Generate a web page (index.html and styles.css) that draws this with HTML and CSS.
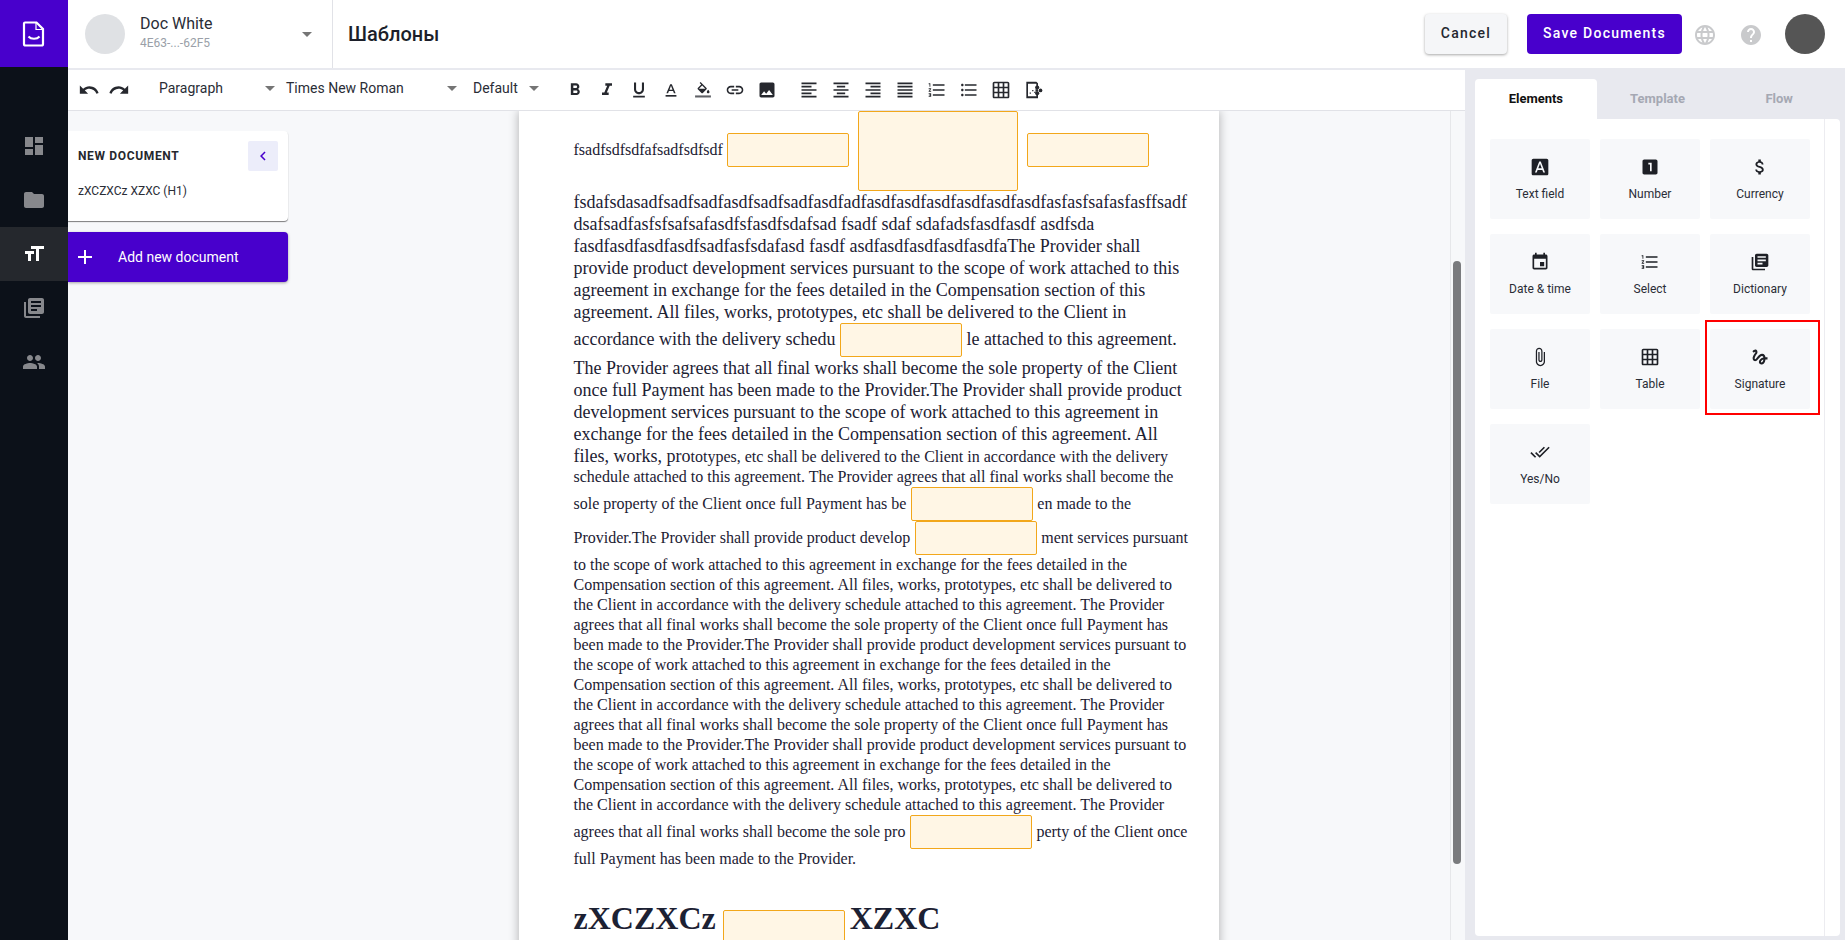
FILE: index.html
```html
<!DOCTYPE html>
<html lang="en">
<head>
    <meta charset="UTF-8">
    <meta name="viewport" content="width=device-width, initial-scale=1.0">
    <title>Шаблоны</title>
    <link rel="stylesheet" href="styles.css">
</head>
<body>
    <nav class="sidebar">
        <div class="logo">
            <svg width="28" height="28" viewBox="0 0 28 28"><path d="M5 2.5h11.5L23 9v15a1.5 1.5 0 0 1-1.5 1.500h-16A1.500 1.500 0 0 1 4 24V3.500a1 1 0 0 1 1-1z" fill="none" stroke="#fff" stroke-width="2.200"/><path d="M16 3v6.500h7" fill="none" stroke="#fff" stroke-width="1.200"/><path d="M8.500 16.500c2.500 3 8.500 3 11 0" fill="none" stroke="#fff" stroke-width="2"/></svg>
        </div>
        <a class="nav-item"><svg class="icon-24" viewBox="0 0 24 24"><path d="M3 13h8V3H3v10zm0 8h8v-6H3v6zm10 0h8V11h-8v10zm0-18v6h8V3h-8z"/></svg></a>
        <a class="nav-item"><svg class="icon-24" viewBox="0 0 24 24"><path d="M10 4H4c-1.100 0-1.990.9-1.990 2L2 18c0 1.100.9 2 2 2h16c1.100 0 2-.9 2-2V8c0-1.100-.9-2-2-2h-8l-2-2z"/></svg></a>
        <a class="nav-item active"><svg class="icon-24" viewBox="0 0 24 24"><path d="M9 4v3h5v12h3V7h5V4H9zm-6 8h3v7h3v-7h3V9H3v3z"/></svg></a>
        <a class="nav-item"><svg class="icon-24" viewBox="0 0 24 24"><path d="M4 6H2v14c0 1.100.9 2 2 2h14v-2H4V6zm16-4H8c-1.100 0-2 .9-2 2v12c0 1.100.9 2 2 2h12c1.100 0 2-.9 2-2V4c0-1.100-.9-2-2-2zm-1 9H9V9h10v2zm-4 4H9v-2h6v2zm4-8H9V5h10v2z"/></svg></a>
        <a class="nav-item"><svg class="icon-24" viewBox="0 0 24 24"><path d="M16 11c1.660 0 2.990-1.340 2.990-3S17.660 5 16 5c-1.660 0-3 1.340-3 3s1.340 3 3 3zm-8 0c1.660 0 2.990-1.340 2.990-3S9.660 5 8 5C6.340 5 5 6.340 5 8s1.340 3 3 3zm0 2c-2.330 0-7 1.170-7 3.500V19h14v-2.500c0-2.330-4.670-3.500-7-3.500zm8 0c-.29 0-.62.02-.97.05 1.160.84 1.970 1.970 1.970 3.450V19h6v-2.500c0-2.330-4.670-3.500-7-3.500z"/></svg></a>
    </nav>

    <div class="page">
        <header class="topbar">
            <div class="account">
                <div class="account-pic"></div>
                <div class="account-info">
                    <div class="account-name">Doc White</div>
                    <div class="account-id">4E63-...-62F5</div>
                </div>
                <span class="caret caret-push"></span>
            </div>
            <div class="page-title">Шаблоны</div>
            <div class="top-actions">
                <button class="btn btn-cancel">Cancel</button>
                <button class="btn btn-save">Save Documents</button>
                <svg class="icon-24 top-icon globe" viewBox="0 0 24 24"><path d="M11.990 2C6.470 2 2 6.480 2 12s4.470 10 9.990 10C17.520 22 22 17.520 22 12S17.520 2 11.990 2zm6.930 6h-2.950c-.32-1.250-.78-2.450-1.380-3.560 1.840.63 3.370 1.910 4.330 3.560zM12 4.040c.83 1.200 1.480 2.530 1.910 3.960h-3.820c.43-1.430 1.080-2.760 1.910-3.960zM4.260 14C4.100 13.360 4 12.690 4 12s.1-1.360.26-2h3.380c-.08.66-.14 1.320-.14 2 0 .68.06 1.340.14 2H4.260zm.82 2h2.950c.32 1.250.78 2.450 1.380 3.560-1.840-.63-3.370-1.900-4.330-3.560zm2.950-8H5.080c.96-1.660 2.490-2.930 4.330-3.560C8.810 5.550 8.350 6.750 8.030 8zM12 19.960c-.83-1.200-1.480-2.530-1.910-3.960h3.820c-.43 1.430-1.080 2.760-1.910 3.960zM14.340 14H9.660c-.09-.66-.16-1.320-.16-2 0-.68.07-1.350.16-2h4.680c.09.65.16 1.320.16 2 0 .68-.07 1.340-.16 2zm.25 5.560c.6-1.110 1.060-2.310 1.380-3.560h2.950c-.96 1.650-2.490 2.930-4.330 3.560zM16.360 14c.08-.66.14-1.320.14-2 0-.68-.06-1.340-.14-2h3.380c.16.64.26 1.310.26 2s-.1 1.360-.26 2h-3.380z"/></svg>
                <svg class="icon-24 top-icon" viewBox="0 0 24 24"><path d="M12 2C6.480 2 2 6.480 2 12s4.480 10 10 10 10-4.480 10-10S17.520 2 12 2zm1 17h-2v-2h2v2zm2.070-7.750l-.9.92C13.450 12.900 13 13.500 13 15h-2v-.5c0-1.100.45-2.100 1.170-2.830l1.240-1.260c.37-.36.59-.86.59-1.410 0-1.100-.9-2-2-2s-2 .9-2 2H8c0-2.210 1.790-4 4-4s4 1.790 4 4c0 .88-.36 1.680-.93 2.250z"/></svg>
                <div class="user-pic"></div>
            </div>
        </header>

        <div class="workspace">
            <main class="editor">
                <div class="toolbar">
                    <svg class="icon-22" viewBox="0 0 24 24"><path d="M12.500 8c-2.650 0-5.050.99-6.900 2.600L2 7v9h9l-3.620-3.620c1.390-1.160 3.160-1.880 5.120-1.880 3.540 0 6.550 2.310 7.600 5.500l2.370-.78C21.080 11.030 17.150 8 12.500 8z"/></svg>
                    <svg class="icon-22 redo" viewBox="0 0 24 24"><path d="M18.400 10.600C16.550 8.990 14.150 8 11.500 8c-4.650 0-8.580 3.030-9.960 7.220L3.900 16c1.050-3.190 4.050-5.500 7.600-5.500 1.950 0 3.730.72 5.120 1.880L13 16h9V7l-3.600 3.600z"/></svg>
                    <div class="tool-select select-paragraph">Paragraph<span class="caret"></span></div>
                    <div class="tool-select select-font">Times New Roman<span class="caret"></span></div>
                    <div class="tool-select select-size">Default<span class="caret"></span></div>
                    <div class="tool-group">
                        <svg class="icon-20" viewBox="0 0 24 24"><path d="M15.600 10.790c.97-.67 1.650-1.770 1.650-2.790 0-2.260-1.750-4-4-4H7v14h7.040c2.090 0 3.710-1.700 3.710-3.790 0-1.520-.86-2.820-2.150-3.420zM10 6.500h3c.83 0 1.500.67 1.500 1.500s-.67 1.500-1.500 1.500h-3v-3zm3.500 9H10v-3h3.500c.83 0 1.500.67 1.500 1.500s-.67 1.500-1.500 1.500z"/></svg>
                        <svg class="icon-20" viewBox="0 0 24 24"><path d="M10 4v3h2.210l-3.420 8H6v3h8v-3h-2.210l3.420-8H18V4z"/></svg>
                        <svg class="icon-20" viewBox="0 0 24 24"><path d="M12 17c3.310 0 6-2.690 6-6V3h-2.500v8c0 1.930-1.570 3.500-3.500 3.500S8.500 12.930 8.500 11V3H6v8c0 3.310 2.690 6 6 6zm-7 2v2h14v-2H5z"/></svg>
                        <svg class="icon-20" viewBox="0 0 24 24"><path d="M5.500 18h13v2h-13z"/><path d="M11 5l-4.500 11h2l1-2.700h5l1 2.700h2L13 5h-2zm-.8 6.600L12 7l1.800 4.600h-3.600z"/></svg>
                        <svg class="icon-20" viewBox="0 0 24 24"><path transform="translate(3 2.400) scale(.8)" d="M16.560 8.940L7.620 0 6.210 1.410l2.380 2.380-5.150 5.150c-.59.59-.59 1.540 0 2.120l5.500 5.500c.29.29.68.44 1.060.44s.77-.15 1.060-.44l5.500-5.500c.59-.58.59-1.530 0-2.120zM5.210 10L10 5.210 14.790 10H5.210zM19 11.500s-2 2.170-2 3.500c0 1.100.9 2 2 2s2-.9 2-2c0-1.330-2-3.500-2-3.500z"/><path class="fill-bar" d="M2.500 18.500h19v2.500h-19z"/></svg>
                        <svg class="icon-20" viewBox="0 0 24 24"><path d="M3.900 12c0-1.710 1.390-3.100 3.100-3.100h4V7H7c-2.760 0-5 2.240-5 5s2.240 5 5 5h4v-1.900H7c-1.710 0-3.100-1.390-3.100-3.100zM8 13h8v-2H8v2zm9-6h-4v1.900h4c1.710 0 3.100 1.390 3.100 3.100s-1.390 3.100-3.100 3.100h-4V17h4c2.760 0 5-2.240 5-5s-2.240-5-5-5z"/></svg>
                        <svg class="icon-20" viewBox="0 0 24 24"><path d="M21 19V5c0-1.100-.9-2-2-2H5c-1.100 0-2 .9-2 2v14c0 1.100.9 2 2 2h14c1.100 0 2-.9 2-2zM8.500 13.500l2.500 3.010L14.500 12l4.500 6H5l3.500-4.500z"/></svg>
                    </div>
                    <div class="tool-group tool-group-align">
                        <svg class="icon-20" viewBox="0 0 24 24"><path d="M15 15H3v2h12v-2zm0-8H3v2h12V7zM3 13h18v-2H3v2zm0 8h18v-2H3v2zM3 3v2h18V3H3z"/></svg>
                        <svg class="icon-20" viewBox="0 0 24 24"><path d="M7 15v2h10v-2H7zm-4 6h18v-2H3v2zm0-8h18v-2H3v2zm4-6v2h10V7H7zM3 3v2h18V3H3z"/></svg>
                        <svg class="icon-20" viewBox="0 0 24 24"><path d="M3 21h18v-2H3v2zm6-4h12v-2H9v2zm-6-4h18v-2H3v2zm6-4h12V7H9v2zM3 3v2h18V3H3z"/></svg>
                        <svg class="icon-20" viewBox="0 0 24 24"><path d="M3 21h18v-2H3v2zm0-4h18v-2H3v2zm0-4h18v-2H3v2zm0-4h18V7H3v2zm0-6v2h18V3H3z"/></svg>
                        <svg class="icon-20" viewBox="0 0 24 24"><path d="M2 17h2v.5H3v1h1v.5H2v1h3v-4H2v1zm1-9h1V4H2v1h1v3zm-1 3h1.800L2 13.100v.9h3v-1H3.200L5 10.900V10H2v1zm5-6v2h14V5H7zm0 14h14v-2H7v2zm0-6h14v-2H7v2z"/></svg>
                        <svg class="icon-20" viewBox="0 0 24 24"><path d="M4 10.500c-.83 0-1.500.67-1.500 1.500s.67 1.500 1.500 1.500 1.500-.67 1.500-1.500-.67-1.500-1.500-1.500zm0-6c-.83 0-1.500.67-1.500 1.500S3.170 7.500 4 7.500 5.500 6.830 5.500 6 4.830 4.500 4 4.500zm0 12c-.83 0-1.500.68-1.500 1.500s.68 1.500 1.500 1.500 1.500-.68 1.500-1.500-.67-1.500-1.500-1.500zM7 19h14v-2H7v2zm0-6h14v-2H7v2zm0-8v2h14V5H7z"/></svg>
                        <svg class="icon-20" viewBox="0 0 24 24"><path d="M20 2H4c-1.100 0-2 .9-2 2v16c0 1.100.9 2 2 2h16c1.100 0 2-.9 2-2V4c0-1.100-.9-2-2-2zM8 20H4v-4h4v4zm0-6H4v-4h4v4zm0-6H4V4h4v4zm6 12h-4v-4h4v4zm0-6h-4v-4h4v4zm0-6h-4V4h4v4zm6 12h-4v-4h4v4zm0-6h-4v-4h4v4zm0-6h-4V4h4v4z"/></svg>
                        <svg class="icon-20" viewBox="0 0 24 24"><path d="M4 2h12l2 2v4h-2V4.500H6v15h10V17h2v5H4z"/><path d="M8 15h1.500v1.500H8zM11 12h1.500v1.500H11zM13.500 14h1.500v1.500h-1.500z"/><circle cx="17" cy="9" r="2.500"/><circle cx="21" cy="12.500" r="2.200"/><circle cx="17" cy="16" r="2.500"/><path d="M15 11h3v3h-3z"/></svg>
                    </div>
                </div>

                <div class="editor-body">
                    <aside class="outline">
                        <div class="outline-card">
                            <div class="outline-head">
                                <span class="outline-title">NEW DOCUMENT</span>
                                <button class="outline-back">
                                    <svg width="18" height="18" viewBox="0 0 24 24"><path d="M15.410 7.410L14 6l-6 6 6 6 1.410-1.410L10.830 12z"/></svg>
                                </button>
                            </div>
                            <div class="outline-item">zXCZXCz XZXC (H1)</div>
                        </div>
                        <button class="add-doc">
                            <svg class="icon-24" viewBox="0 0 24 24"><path d="M19 13h-6v6h-2v-6H5v-2h6V5h2v6h6v2z"/></svg>
                            <span>Add new document</span>
                        </button>
                    </aside>

                    <div class="doc-wrap">
                        <article class="doc">
                            <p class="doc-text">fsadfsdfsdfafsadfsdfsdf<span class="field"></span><span class="field field-big"></span><span class="field"></span></p>
                            <p class="doc-text"><span class="line-large">fsdafsdasadfsadfsadfasdfsadfsadfasdfadfasdfasdfasdfasdfasdfasdfasfasfsafasfasffsadf<br>dsafsadfasfsfsafsafasdfsfasdfsdafsad fsadf sdaf sdafadsfasdfasdf asdfsda fasdfasdfasdfasdfsadfasfsdafasd fasdf asdfasdfasdfasdfasdfaThe Provider shall provide product development services pursuant to the scope of work attached to this agreement in exchange for the fees detailed in the Compensation section of this agreement. All files, works, prototypes, etc shall be delivered to the Client in accordance with the delivery schedu<span class="field"></span>le attached to this agreement. The Provider agrees that all final works shall become the sole property of the Client once full Payment has been made to the Provider.The Provider shall provide product development services pursuant to the scope of work attached to this agreement in exchange for the fees detailed in the Compensation section of this agreement. All files, works, pro</span>totypes, etc shall be delivered to the Client in accordance with the delivery schedule attached to this agreement. The Provider agrees that all final works shall become the sole property of the Client once full Payment has be<span class="field"></span>en made to the Provider.The Provider shall provide product develop<span class="field"></span>ment services pursuant to the scope of work attached to this agreement in exchange for the fees detailed in the Compensation section of this agreement. All files, works, prototypes, etc shall be delivered to the Client in accordance with the delivery schedule attached to this agreement. The Provider agrees that all final works shall become the sole property of the Client once full Payment has been made to the Provider.The Provider shall provide product development services pursuant to the scope of work attached to this agreement in exchange for the fees detailed in the Compensation section of this agreement. All files, works, prototypes, etc shall be delivered to the Client in accordance with the delivery schedule attached to this agreement. The Provider agrees that all final works shall become the sole property of the Client once full Payment has been made to the Provider.The Provider shall provide product development services pursuant to the scope of work attached to this agreement in exchange for the fees detailed in the Compensation section of this agreement. All files, works, prototypes, etc shall be delivered to the Client in accordance with the delivery schedule attached to this agreement. The Provider agrees that all final works shall become the sole pro<span class="field"></span>perty of the Client once full Payment has been made to the Provider.</p>
                            <h1 class="doc-heading">zXCZXCz<span class="field"></span>XZXC</h1>
                        </article>
                    </div>

                    <div class="scroll-track"><div class="scroll-thumb"></div></div>
                </div>
            </main>

            <aside class="panel">
                <div class="tabs">
                    <div class="tab active">Elements</div>
                    <div class="tab">Template</div>
                    <div class="tab">Flow</div>
                </div>
                <div class="panel-body">
                    <div class="element-grid">
                        <div class="element">
                            <svg class="icon-20" viewBox="0 0 24 24"><path d="M9.930 13.500h4.140L12 7.980zM20 2H4c-1.100 0-2 .9-2 2v16c0 1.100.9 2 2 2h16c1.100 0 2-.9 2-2V4c0-1.100-.9-2-2-2zm-4.050 16.500l-1.140-3H9.170l-1.120 3H5.960l5.110-13h1.860l5.110 13h-2.090z"/></svg>
                            <span>Text field</span>
                        </div>
                        <div class="element">
                            <svg class="icon-20" viewBox="0 0 24 24"><path d="M19 3H5c-1.100 0-2 .9-2 2v14c0 1.100.9 2 2 2h14c1.100 0 2-.9 2-2V5c0-1.100-.9-2-2-2zm-5 14h-2V9h-2V7h4v10z"/></svg>
                            <span>Number</span>
                        </div>
                        <div class="element">
                            <svg class="icon-20" viewBox="0 0 24 24"><path d="M11.800 10.900c-2.270-.59-3-1.200-3-2.150 0-1.090 1.010-1.850 2.700-1.850 1.780 0 2.440.85 2.500 2.100h2.210c-.07-1.720-1.120-3.300-3.210-3.810V3h-3v2.160c-1.940.42-3.500 1.680-3.500 3.610 0 2.310 1.910 3.460 4.700 4.130 2.500.6 3 1.480 3 2.410 0 .69-.49 1.790-2.700 1.790-2.060 0-2.870-.92-2.980-2.100h-2.200c.12 2.190 1.760 3.420 3.680 3.830V21h3v-2.150c1.950-.37 3.500-1.500 3.500-3.550 0-2.840-2.430-3.810-4.700-4.400z"/></svg>
                            <span>Currency</span>
                        </div>
                        <div class="element">
                            <svg class="icon-20" viewBox="0 0 24 24"><path d="M17 12h-5v5h5v-5zM16 1v2H8V1H6v2H5c-1.110 0-1.990.9-1.990 2L3 19c0 1.100.89 2 2 2h14c1.100 0 2-.9 2-2V5c0-1.100-.9-2-2-2h-1V1h-2zm3 18H5V8h14v11z"/></svg>
                            <span>Date &amp; time</span>
                        </div>
                        <div class="element">
                            <svg class="icon-20" viewBox="0 0 24 24"><path d="M2 17h2v.5H3v1h1v.5H2v1h3v-4H2v1zm1-9h1V4H2v1h1v3zm-1 3h1.800L2 13.100v.9h3v-1H3.200L5 10.900V10H2v1zm5-6v2h14V5H7zm0 14h14v-2H7v2zm0-6h14v-2H7v2z"/></svg>
                            <span>Select</span>
                        </div>
                        <div class="element">
                            <svg class="icon-20" viewBox="0 0 24 24"><path d="M4 6H2v14c0 1.100.9 2 2 2h14v-2H4V6zm16-4H8c-1.100 0-2 .9-2 2v12c0 1.100.9 2 2 2h12c1.100 0 2-.9 2-2V4c0-1.100-.9-2-2-2zm-1 9H9V9h10v2zm-4 4H9v-2h6v2zm4-8H9V5h10v2z"/></svg>
                            <span>Dictionary</span>
                        </div>
                        <div class="element">
                            <svg class="icon-20" viewBox="0 0 24 24"><path d="M16.500 6v11.500c0 2.210-1.790 4-4 4s-4-1.790-4-4V5c0-1.380 1.120-2.500 2.500-2.500s2.500 1.120 2.500 2.500v10.500c0 .55-.45 1-1 1s-1-.45-1-1V6H10v9.500c0 1.380 1.120 2.500 2.500 2.500s2.500-1.120 2.500-2.500V5c0-2.210-1.790-4-4-4S7 2.790 7 5v12.500c0 3.040 2.460 5.500 5.500 5.500s5.500-2.460 5.500-5.500V6h-1.500z"/></svg>
                            <span>File</span>
                        </div>
                        <div class="element">
                            <svg class="icon-20" viewBox="0 0 24 24"><path d="M20 2H4c-1.100 0-2 .9-2 2v16c0 1.100.9 2 2 2h16c1.100 0 2-.9 2-2V4c0-1.100-.9-2-2-2zM8 20H4v-4h4v4zm0-6H4v-4h4v4zm0-6H4V4h4v4zm6 12h-4v-4h4v4zm0-6h-4v-4h4v4zm0-6h-4V4h4v4zm6 12h-4v-4h4v4zm0-6h-4v-4h4v4zm0-6h-4V4h4v4z"/></svg>
                            <span>Table</span>
                        </div>
                        <div class="element">
                            <svg class="icon-20" viewBox="0 0 24 24"><path d="M4.590 6.890c.7-.71 1.400-1.350 1.710-1.220.5.2 0 1.030-.3 1.520-.25.42-2.860 3.890-2.860 6.310 0 1.280.48 2.340 1.340 2.980.75.56 1.740.73 2.640.46 1.070-.31 1.950-1.400 3.060-2.770 1.210-1.490 2.830-3.440 4.080-3.440 1.630 0 1.650 1.010 1.760 1.790-3.780.64-5.380 3.670-5.380 5.370 0 1.700 1.440 3.090 3.210 3.090 1.630 0 4.290-1.330 4.690-6.100H21v-2.500h-2.470c-.15-1.650-1.090-4.200-4.030-4.200-2.250 0-4.180 1.910-4.940 2.840-.58.73-2.060 2.480-2.290 2.720-.25.3-.68.84-1.110.84-.45 0-.72-.83-.36-1.920.35-1.090 1.400-2.860 1.850-3.520.78-1.140 1.300-1.920 1.300-3.280C8.950 3.690 7.310 3 6.440 3 5.120 3 3.970 4 3.720 4.250c-.36.36-.66.66-.88.93l1.750 1.710zm9.290 11.660c-.31 0-.74-.26-.74-.72 0-.6.73-2.200 2.870-2.760-.3 2.690-1.430 3.480-2.130 3.480z"/></svg>
                            <span>Signature</span>
                            <span class="highlight"></span>
                        </div>
                        <div class="element">
                            <svg class="icon-20" viewBox="0 0 24 24"><path d="M18 7l-1.410-1.410-6.340 6.340 1.410 1.410L18 7zm4.240-1.410L11.660 16.170 7.480 12l-1.410 1.410L11.660 19l12-12-1.420-1.410zM.41 13.410L6 19l1.410-1.410L1.830 12 .41 13.410z"/></svg>
                            <span>Yes/No</span>
                        </div>
                    </div>
                </div>
            </aside>
        </div>
    </div>
</body>
</html>
```

FILE: styles.css
```css
* {
    box-sizing: border-box;
}

body {
    font-family: 'Roboto', sans-serif;
    background-color: #f7f8fa;
    margin: 0;
    display: flex;
    height: 100vh;
    overflow: hidden;
    color: #1c1f2a;
}

button {
    font-family: inherit;
    border: none;
    cursor: pointer;
}

svg {
    display: block;
    flex-shrink: 0;
}

.icon-24 {
    width: 24px;
    height: 24px;
}

.icon-22 {
    width: 22px;
    height: 22px;
}

.icon-20 {
    width: 20px;
    height: 20px;
}

.caret {
    display: inline-block;
    border-left: 5px solid transparent;
    border-right: 5px solid transparent;
    border-top: 5px solid #757575;
}

/* left nav */
.sidebar {
    width: 68px;
    flex-shrink: 0;
    background-color: #0c1119;
}

.logo {
    height: 67px;
    margin-bottom: 52px;
    background-color: #4800cc;
    display: flex;
    align-items: center;
    justify-content: center;
}

.nav-item {
    height: 54px;
    display: flex;
    align-items: center;
    justify-content: center;
    fill: #87888c;
}

.nav-item.active {
    background-color: #25282d;
    fill: #fff;
}

.page {
    flex: 1;
    min-width: 0;
    display: flex;
    flex-direction: column;
}

/* top bar */
.topbar {
    height: 70px;
    flex-shrink: 0;
    background-color: #fff;
    border-bottom: 2px solid #e8e9ef;
    display: flex;
    align-items: center;
    padding-right: 20px;
}

.account {
    width: 265px;
    height: 100%;
    padding: 0 20px 0 17px;
    border-right: 1px solid #e1e2e7;
    display: flex;
    align-items: center;
    gap: 15px;
}

.account-pic {
    width: 40px;
    height: 40px;
    border-radius: 50%;
    background-color: #dfe1e4;
}

.account-name {
    font-size: 16px;
    line-height: 20px;
    margin-top: -4px;
    color: #2a2d36;
}

.account-id {
    font-size: 12px;
    line-height: 14px;
    margin-top: 2px;
    color: #9a9fa8;
}

.caret-push {
    margin-left: auto;
}

.page-title {
    font-size: 20px;
    font-weight: 500;
    margin-left: 15px;
}

.top-actions {
    margin-left: auto;
    display: flex;
    align-items: center;
}

.btn {
    height: 40px;
    padding: 0 0 2px;
    border-radius: 4px;
    font-size: 14px;
    font-weight: 500;
    letter-spacing: 1.25px;
}

.btn-cancel {
    width: 82px;
    background-color: #f5f6f8;
    color: #24272f;
    box-shadow: 0 1px 3px rgba(0, 0, 0, 0.35);
}

.btn-save {
    width: 155px;
    margin-left: 20px;
    background-color: #4800cc;
    color: #fff;
}

.top-icon {
    fill: #c9cacc;
    margin-left: 22px;
    margin-top: 2px;
}

.top-icon.globe {
    margin-left: 11px;
}

.user-pic {
    width: 40px;
    height: 40px;
    margin-left: 22px;
    border-radius: 50%;
    background-color: #555;
}

.workspace {
    flex: 1;
    min-height: 0;
    display: flex;
}

.editor {
    flex: 1;
    min-width: 0;
    display: flex;
    flex-direction: column;
}

/* editor toolbar */
.toolbar {
    height: 41px;
    flex-shrink: 0;
    background-color: #fff;
    border-bottom: 1px solid #e1e2e7;
    padding-left: 10px;
    display: flex;
    align-items: center;
    fill: #26282e;
}

.fill-bar {
    fill: #5f6166;
}

.redo {
    margin-left: 8px;
}

.tool-select {
    display: flex;
    align-items: center;
    justify-content: space-between;
    font-size: 14px;
    color: #2a2d36;
    margin-top: -4px;
}

.select-paragraph {
    width: 116px;
    margin-left: 29px;
}

.select-font {
    width: 171px;
    margin-left: 11px;
}

.select-size {
    width: 66px;
    margin-left: 16px;
}

.tool-group {
    display: flex;
    gap: 12px;
    margin-left: 26px;
}

.tool-group-align {
    margin-left: 22px;
}

.editor-body {
    flex: 1;
    min-height: 0;
    display: flex;
    overflow: hidden;
}

/* document outline */
.outline {
    width: 220px;
    flex-shrink: 0;
    padding-top: 20px;
}

.outline-card {
    height: 90px;
    background-color: #fff;
    border-radius: 0 4px 4px 0;
    box-shadow: 0 1px 1px rgba(0, 0, 0, 0.5);
    padding: 10px;
}

.outline-head {
    display: flex;
    align-items: center;
    justify-content: space-between;
}

.outline-title {
    font-size: 12px;
    font-weight: 700;
    letter-spacing: 0.65px;
    color: #26282e;
}

.outline-back {
    width: 30px;
    height: 30px;
    padding: 0;
    background-color: #ecedfa;
    border-radius: 2px;
    display: flex;
    align-items: center;
    justify-content: center;
    fill: #4800cc;
}

.outline-item {
    font-size: 12px;
    margin-top: 13px;
    color: #2a2d36;
}

.add-doc {
    width: 100%;
    height: 50px;
    margin-top: 11px;
    padding: 0 0 0 5px;
    background-color: #4800cc;
    color: #fff;
    fill: #fff;
    font-size: 14px;
    border-radius: 0 4px 4px 0;
    box-shadow: 0 1px 3px rgba(0, 0, 0, 0.35);
    display: flex;
    align-items: center;
    gap: 21px;
}

/* document */
.doc-wrap {
    flex: 1;
    min-width: 0;
    display: flex;
    justify-content: center;
}

.doc {
    width: 700px;
    flex-shrink: 0;
    align-self: flex-start;
    background-color: #fff;
    box-shadow: 0 0 10px rgba(0, 0, 0, 0.3);
    padding: 0 28px 40px 54.5px;
    font-family: 'Liberation Serif', serif;
    color: #1c2133;
}

.doc-text {
    margin: 0;
    font-size: 16px;
    line-height: 20px;
}

.line-large {
    font-size: 18px;
    line-height: 22px;
}

.field {
    display: inline-block;
    width: 122px;
    height: 34px;
    margin: 0 4.5px;
    vertical-align: -12px;
    background-color: #fff6e5;
    border: 1px solid #f2a71b;
    border-radius: 2px;
}

.field-big {
    width: 160px;
    height: 80px;
    vertical-align: -36px;
}

.doc-heading {
    margin: 31px 0 0;
    font-size: 32px;
    line-height: 37px;
}

.doc-heading .field {
    margin-left: 7.5px;
    vertical-align: -15px;
}

.scroll-track {
    width: 15px;
    flex-shrink: 0;
    border-left: 1px solid #e6e7ea;
    padding: 150px 2px 0;
}

.scroll-thumb {
    width: 8px;
    height: 603px;
    background-color: #7a7b7e;
    border-radius: 4px;
}

/* right panel */
.panel {
    width: 380px;
    flex-shrink: 0;
    background-color: #e8e9ef;
    padding: 9px 5px 4px 10px;
    display: flex;
    flex-direction: column;
}

.tabs {
    display: flex;
    height: 40px;
    flex-shrink: 0;
}

.tab {
    width: 122px;
    padding-bottom: 2px;
    display: flex;
    align-items: center;
    justify-content: center;
    font-size: 13px;
    font-weight: 700;
    color: #a5a8b3;
    border-radius: 4px 4px 0 0;
}

.tab.active {
    background-color: #fff;
    color: #111;
}

.panel-body {
    flex: 1;
    background-color: #fff;
    border-radius: 0 4px 4px 4px;
    padding-right: 15px;
}

.element-grid {
    height: 100%;
    border-right: 1px solid #ececf0;
    padding: 20px 15px;
    display: grid;
    grid-template-columns: repeat(3, 100px);
    grid-auto-rows: 80px;
    gap: 15px 10px;
}

.element {
    position: relative;
    background-color: #f7f8fa;
    border-radius: 2px;
    padding-top: 18px;
    display: flex;
    flex-direction: column;
    align-items: center;
    gap: 9px;
    font-size: 12px;
    line-height: 16px;
    color: #2a2d36;
    fill: #1e2026;
}

.highlight {
    position: absolute;
    top: -9px;
    left: -5px;
    right: -10px;
    bottom: -6px;
    border: 2px solid #ff0000;
}
```
